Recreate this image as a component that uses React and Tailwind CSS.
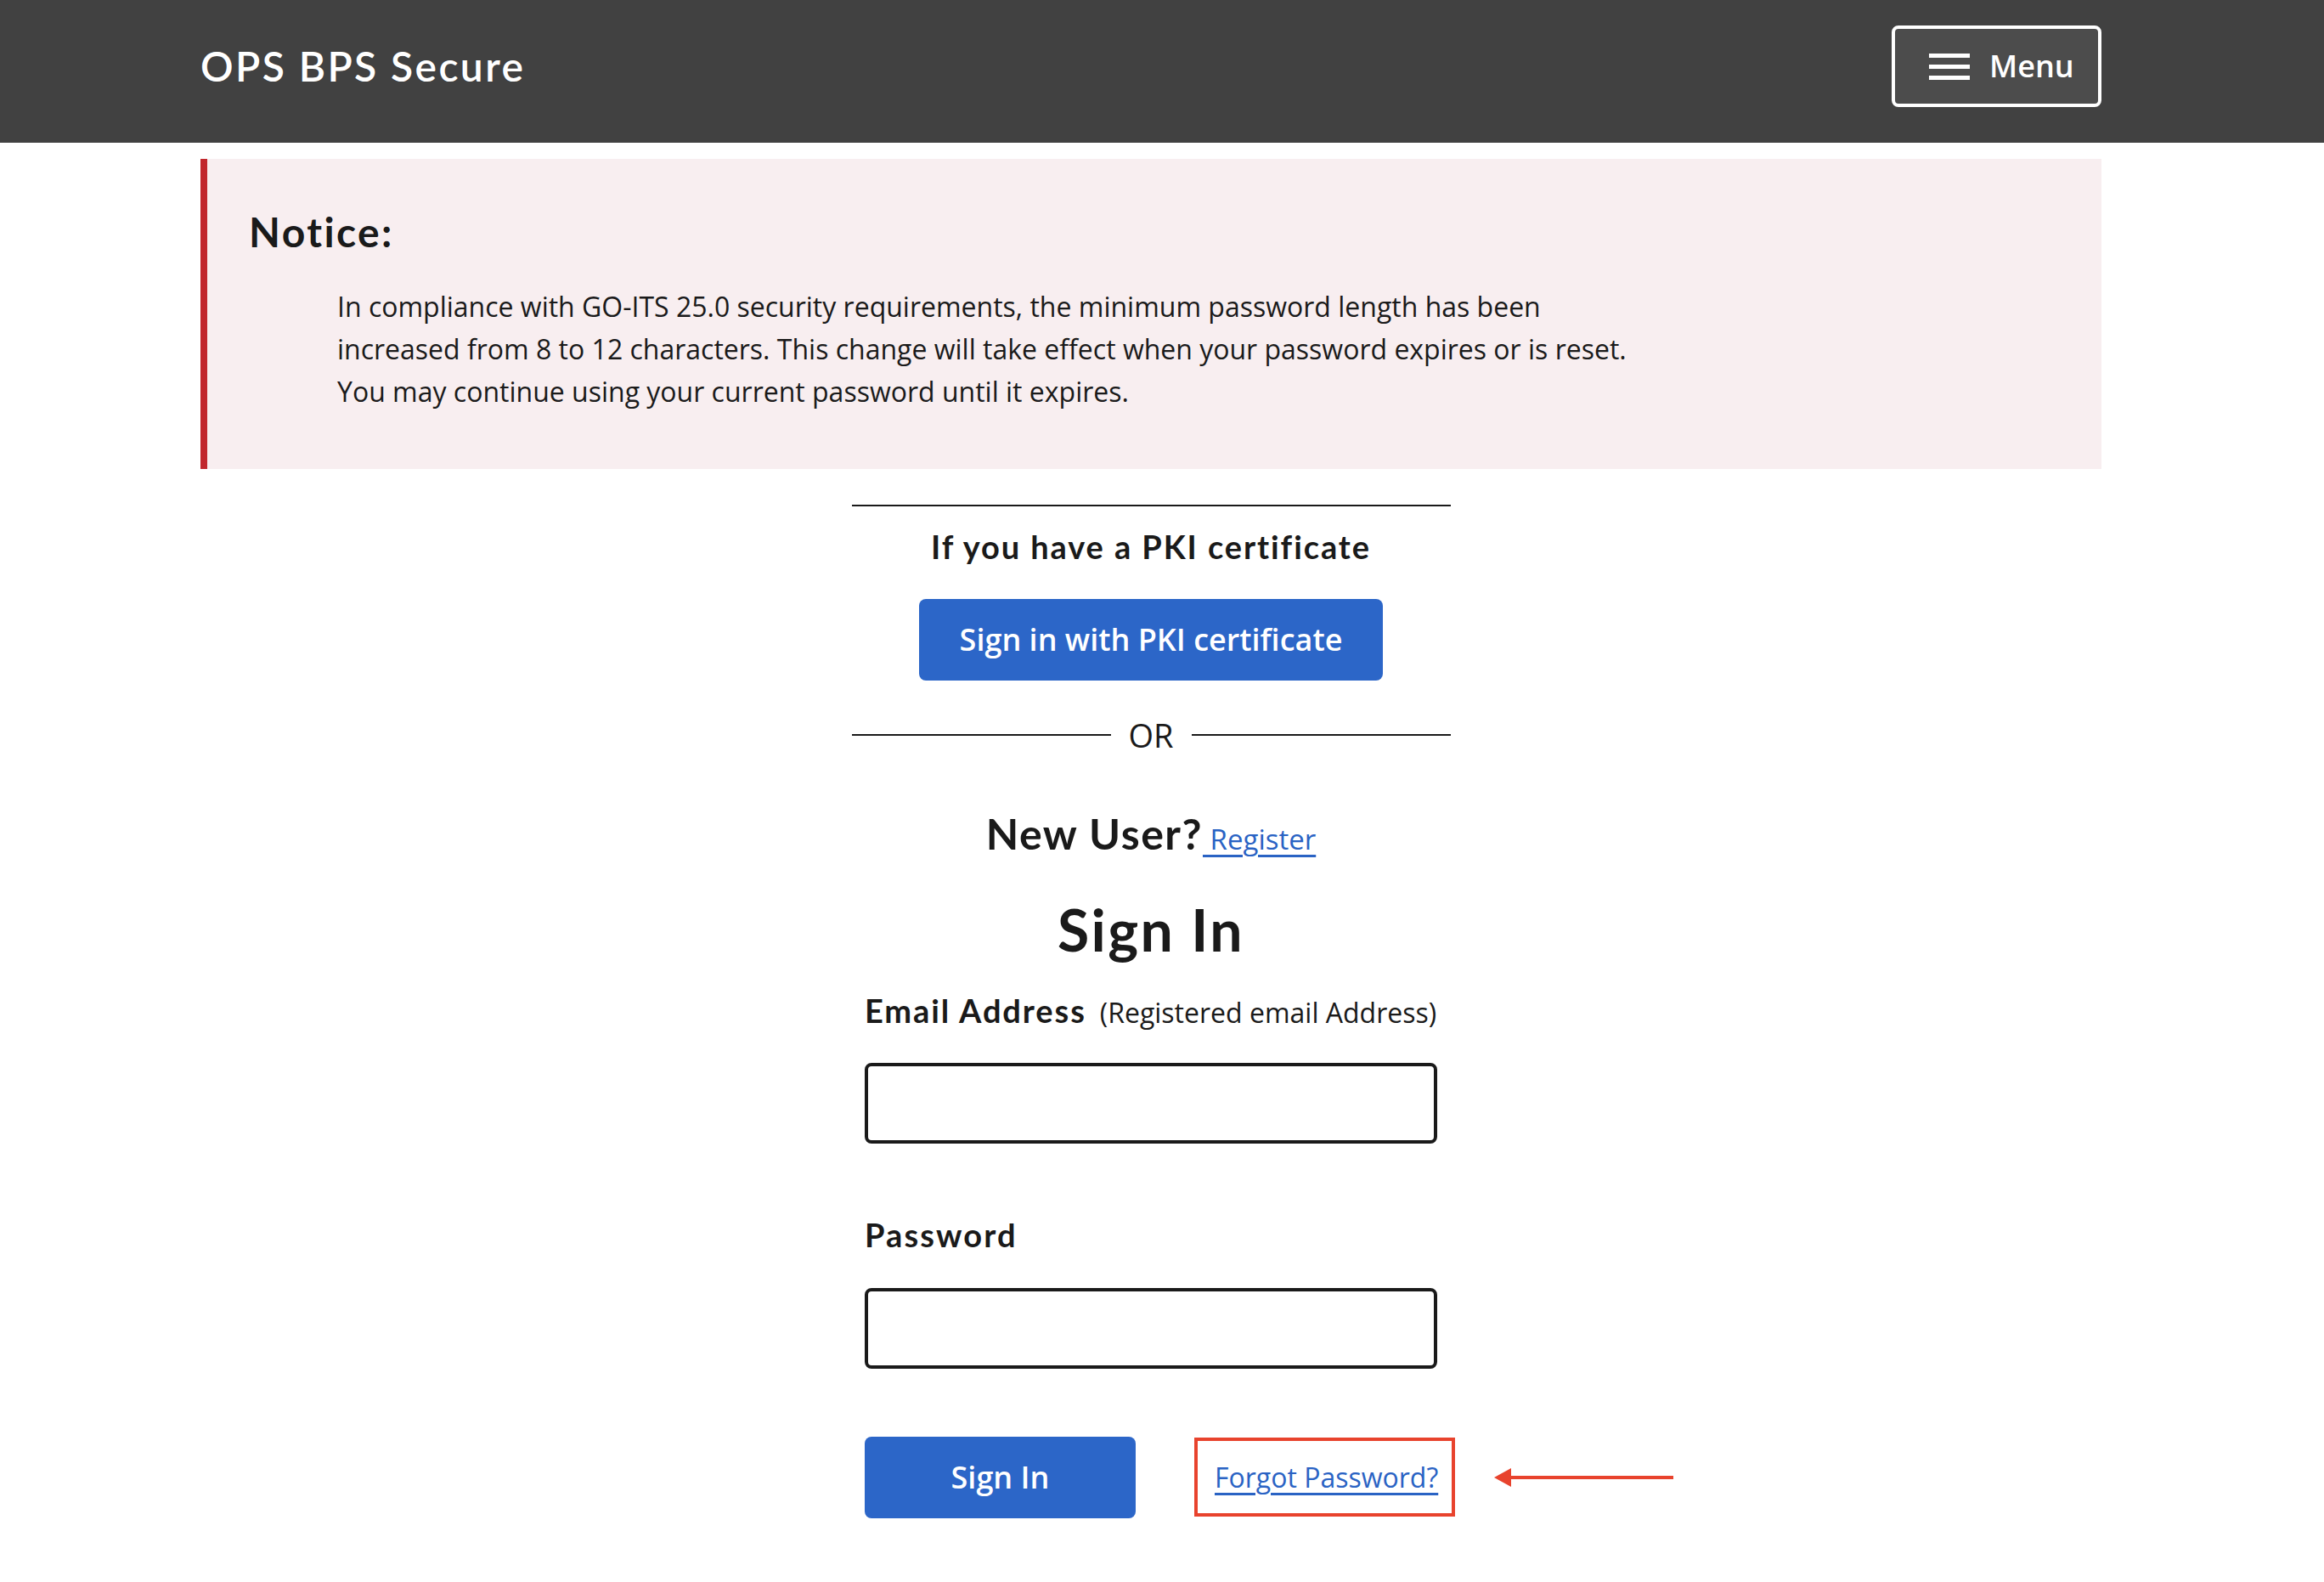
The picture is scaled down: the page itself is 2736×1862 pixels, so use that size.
// Sign-in page for OPS BPS Secure
const HEAD = "font-['Lato','Open_Sans',sans-serif]";

const Hamburger = () => (
  <svg width="48" height="31" viewBox="0 0 48 31" fill="currentColor" xmlns="http://www.w3.org/2000/svg">
    <rect x="0" y="0" width="48" height="5" />
    <rect x="0" y="13" width="48" height="5" />
    <rect x="0" y="26" width="48" height="5" />
  </svg>
);

const Arrow = () => (
  <svg width="212" height="24" viewBox="0 0 212 24" xmlns="http://www.w3.org/2000/svg">
    <line x1="16" y1="12" x2="211" y2="12" stroke="#e8432d" strokeWidth="4" />
    <polygon points="0,12 20,1 20,23" fill="#e8432d" />
  </svg>
);

export default function App() {
  return (
    <div className="min-h-screen bg-white font-['Open_Sans',sans-serif] text-[#1a1a1a]">
      <header className="h-[168px] bg-[#414141]">
        <div className="w-[2710px] h-full px-[236px] pb-[12px] flex items-center justify-between">
          <span className={`${HEAD} font-semibold text-[48px] tracking-[0.05em] leading-none text-white`}>OPS BPS Secure</span>
          <button className="w-[247px] h-[96px] rounded-[8px] border-[4px] border-white bg-[#4c4c4c] flex items-center pl-[40px] gap-[23px] text-white text-[36px] font-semibold">
            <Hamburger />
            <span>Menu</span>
          </button>
        </div>
      </header>

      <main className="w-[2710px] px-[236px] pb-[80px]">
        <section className="mt-[19px] bg-[#f8eef0] border-l-[8px] border-[#c1272d] pl-[49px] pt-[57px] pb-[66px]">
          <h2 className={`${HEAD} font-bold text-[48px] tracking-[0.05em] leading-[1.2]`}>Notice:</h2>
          <p className="mt-[34px] ml-[104px] text-[32px] leading-[50px]">
            In compliance with GO-ITS 25.0 security requirements, the minimum password length has been
            <br />
            increased from 8 to 12 characters. This change will take effect when your password expires or is reset.
            <br />
            You may continue using your current password until it expires.
          </p>
        </section>

        <div className="w-[705px] mx-auto flex flex-col items-center">
          <div className="mt-[42px] w-full h-[2px] bg-[#1a1a1a]" />
          <h3 className={`${HEAD} mt-[25px] font-bold text-[38px] tracking-[0.05em] leading-[1.2]`}>If you have a PKI certificate</h3>
          <button className="mt-[39px] w-[546px] h-[96px] rounded-[8px] bg-[#2c66c8] text-white text-[36px] font-semibold">
            Sign in with PKI certificate
          </button>
          <div className="mt-[38px] w-full flex items-center gap-[21px]">
            <div className="flex-1 h-[2px] bg-[#1a1a1a]" />
            <span className="text-[38px] leading-[52px]">OR</span>
            <div className="flex-1 h-[2px] bg-[#1a1a1a]" />
          </div>
          <p className="mt-[60px] text-center">
            <span className={`${HEAD} font-bold text-[50px] tracking-[0.03em] leading-[1.2]`}>New User?</span>
            <a href="#" className="text-[33px] text-[#2a63c4] underline decoration-[3px] underline-offset-[6px]"> Register</a>
          </p>
          <h1 className={`${HEAD} mt-[40px] font-bold text-[68px] tracking-[0.035em] leading-[1.2]`}>Sign In</h1>
        </div>

        <form className="w-[674px] mx-auto">
          <label className="mt-[33px] flex items-baseline gap-[16px] whitespace-nowrap">
            <span className={`${HEAD} shrink-0 font-bold text-[38px] tracking-[0.05em] leading-[1.2]`}>Email Address</span>
            <span className="shrink-0 text-[32px]">(Registered email Address)</span>
          </label>
          <input type="email" className="mt-[35px] block w-full h-[95px] rounded-[8px] border-[4px] border-[#1a1a1a] bg-white" />

          <label className={`${HEAD} mt-[85px] block font-bold text-[38px] tracking-[0.055em] leading-[1.2]`}>Password</label>
          <input type="password" className="mt-[39px] block w-full h-[95px] rounded-[8px] border-[4px] border-[#1a1a1a] bg-white" />

          <div className="mt-[80px] flex items-center">
            <button type="button" className="w-[319px] h-[96px] rounded-[8px] bg-[#2c66c8] text-white text-[36px] font-semibold shrink-0">
              Sign In
            </button>
            <div className="ml-[69px] w-[307px] h-[93px] shrink-0 border-[4px] border-[#e8432d] flex items-center pl-[20px]">
              <a href="#" className="text-[32px] text-[#2a63c4] underline decoration-[3px] underline-offset-[6px] whitespace-nowrap">
                Forgot Password?
              </a>
            </div>
            <div className="ml-[46px] shrink-0 flex">
              <Arrow />
            </div>
          </div>
        </form>
      </main>
    </div>
  );
}
